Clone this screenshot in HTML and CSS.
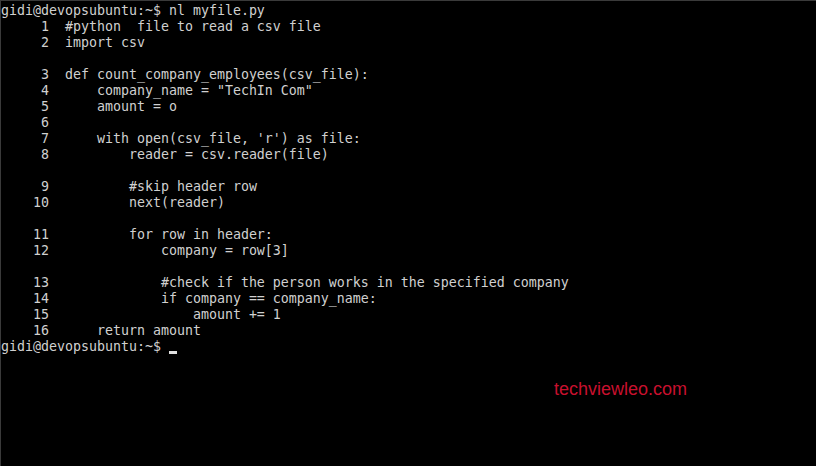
FILE: index.html
```html
<!DOCTYPE html>
<html>
<head>
<meta charset="utf-8">
<link rel="stylesheet" href="styles.css">
</head>
<body>
<div class="term">
<pre class="out">gidi@devopsubuntu:~$ nl myfile.py
     1	#python  file to read a csv file
     2	import csv

     3	def count_company_employees(csv_file):
     4	    company_name = "TechIn Com"
     5	    amount = o
     6	
     7	    with open(csv_file, 'r') as file:
     8	        reader = csv.reader(file)

     9	        #skip header row
    10	        next(reader)

    11	        for row in header:
    12	            company = row[3]

    13	            #check if the person works in the specified company
    14	            if company == company_name:
    15	                amount += 1
    16	    return amount
gidi@devopsubuntu:~$ <span class="cursor"></span></pre>
<div class="mark">techviewleo.com</div>
</div>
</body>
</html>
```
FILE: styles.css
```css
html, body {
  margin: 0;
  padding: 0;
  background: #000;
  width: 816px;
  height: 466px;
  overflow: hidden;
}
.term {
  position: relative;
  width: 815px;
  height: 465px;
  border-top: 1px solid #3a3a3a;
  border-left: 1px solid #3a3a3a;
  background: #000;
}
.out {
  margin: 0;
  padding: 2px 0 0 0;
  font-family: "DejaVu Sans Mono", monospace;
  font-size: 13.29px;
  line-height: 16px;
  color: #d0d0d0;
  tab-size: 8;
  white-space: pre;
}
.cursor {
  display: inline-block;
  width: 8px;
  height: 3px;
  background: #e0e0e0;
  vertical-align: -3px;
}
.mark {
  position: absolute;
  left: 553px;
  top: 378px;
  font-family: "Liberation Sans", Arial, sans-serif;
  font-size: 18px;
  color: #c8102e;
}
```
